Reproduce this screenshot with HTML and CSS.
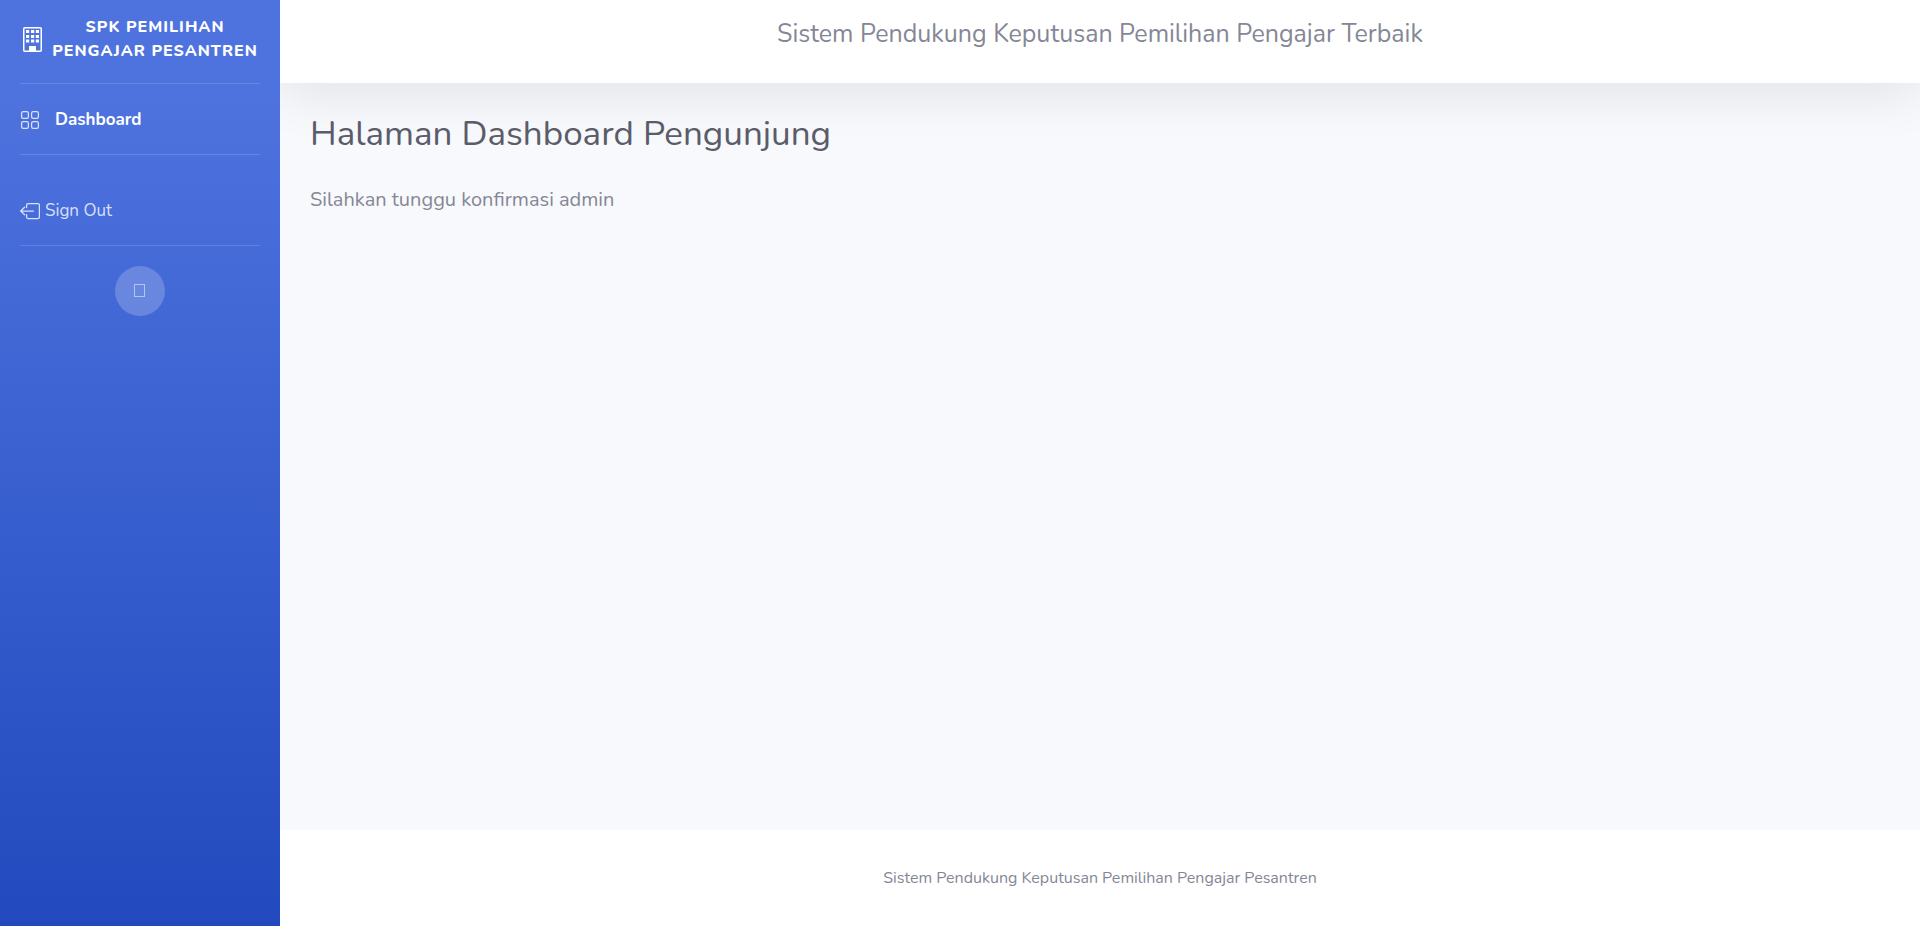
FILE: index.html
```html
<!DOCTYPE html>
<html lang="id">
<head>
<meta charset="utf-8">
<title>Dashboard Pengunjung</title>
<link rel="stylesheet" href="styles.css">
</head>
<body>
<div class="wrapper">
  <nav class="sidebar">
    <a class="brand" href="#">
      <svg class="brand-icon" width="19" height="25" viewBox="0 0 19 25" fill="none" aria-hidden="true">
        <rect x="0.75" y="0.75" width="17.5" height="23.5" rx="1" stroke="currentColor" stroke-width="1.5"/>
        <path fill="currentColor" d="M3 3h3.2v3H3zM8 3h3.2v3H8zM12.800 3h3.2v3h-3.200zM3 8h3.200v3H3zM8 8h3.200v3H8zM12.800 8h3.200v3h-3.200zM3 12.500h3.200v3H3zM8 12.500h3.200v3H8zM12.800 12.500h3.200v3h-3.200zM6 19h7v6H6z"/>
      </svg>
      <span class="brand-text">SPK Pemilihan Pengajar Pesantren</span>
    </a>
    <hr class="divider">
    <a class="nav-link active" href="#">
      <svg class="nav-icon" width="20" height="20" viewBox="0 0 20 20" fill="none" stroke="currentColor" stroke-width="1.25" aria-hidden="true">
        <rect x="1.6" y="1.6" width="6.800" height="6.800" rx="1.700"/>
        <rect x="11.600" y="1.600" width="6.800" height="6.800" rx="1.700"/>
        <rect x="1.600" y="11.600" width="6.800" height="6.800" rx="1.700"/>
        <rect x="11.600" y="11.600" width="6.800" height="6.800" rx="1.700"/>
      </svg>
      <span>Dashboard</span>
    </a>
    <hr class="divider">
    <a class="nav-link signout" href="#">
      <svg class="nav-icon" width="20" height="20" viewBox="0 0 20 20" fill="none" stroke="currentColor" stroke-width="1.250" stroke-linecap="round" stroke-linejoin="round" aria-hidden="true">
        <path d="M6.600 6.500V4a1.500 1.500 0 0 1 1.500-1.500H18A1.500 1.500 0 0 1 19.400 4v12a1.500 1.500 0 0 1-1.400 1.500H8.100A1.500 1.500 0 0 1 6.600 16v-2.500"/>
        <path d="M13.500 10H.7M4.600 6.200.7 10l3.900 3.800"/>
      </svg>
      <span>Sign Out</span>
    </a>
    <hr class="divider">
    <button class="toggle" type="button" aria-label="Toggle sidebar"><span class="toggle-glyph"></span></button>
  </nav>
  <div class="content">
    <header class="topbar">Sistem Pendukung Keputusan Pemilihan Pengajar Terbaik</header>
    <main class="page">
      <h1 class="page-title">Halaman Dashboard Pengunjung</h1>
      <p class="lead">Silahkan tunggu konfirmasi admin</p>
    </main>
    <footer class="footer">Sistem Pendukung Keputusan Pemilihan Pengajar Pesantren</footer>
  </div>
</div>
</body>
</html>
```
FILE: styles.css
```css
* { box-sizing: border-box; }
body {
  margin: 0;
  font-family: Nunito, Lato, sans-serif;
  font-size: 16px;
  line-height: 24px;
  color: #858796;
  background: #fff;
}
.wrapper { display: flex; min-height: 100vh; }
.sidebar {
  flex: 0 0 280px;
  display: flex;
  flex-direction: column;
  color: #fff;
  background: #4e73df linear-gradient(180deg, #4e73df 10%, #224abe 100%);
}
.sidebar a { color: inherit; text-decoration: none; }
.brand {
  display: flex;
  align-items: center;
  justify-content: center;
  gap: 10px;
  padding: 15px 22px 20px 23px;
}
.brand-icon { flex: none; }
.brand-text {
  flex: 1;
  font-weight: 800;
  letter-spacing: 1px;
  text-align: center;
  text-transform: uppercase;
}
.divider {
  width: 240px;
  margin: 0 20px;
  border: 0;
  border-top: 1px solid rgba(255, 255, 255, 0.15);
}
.nav-link {
  display: flex;
  align-items: center;
  padding: 24px 20px 22px;
  font-size: 17px;
}
.nav-icon { color: rgba(255, 255, 255, 0.8); }
.active { gap: 15px; font-weight: 700; }
.sidebar .signout {
  gap: 5px;
  padding: 44px 20px 22px;
  color: rgba(255, 255, 255, 0.8);
}
.toggle {
  display: flex;
  align-items: center;
  justify-content: center;
  align-self: center;
  width: 50px;
  height: 50px;
  margin-top: 20px;
  padding: 0 1px 1px 0;
  border: 0;
  border-radius: 50%;
  background: rgba(255, 255, 255, 0.2);
}
.toggle-glyph {
  width: 11px;
  height: 13px;
  border: 1px solid rgba(255, 255, 255, 0.5);
}
.content {
  flex: 1;
  min-width: 0;
  display: flex;
  flex-direction: column;
  overflow: hidden;
  background: #f8f9fc;
}
.topbar {
  padding: 18px 24px 33px;
  background: #fff;
  box-shadow: 0 16px 48px rgba(0, 0, 0, 0.08);
  font-size: 25px;
  line-height: 32px;
  text-align: center;
}
.page { flex: 1; padding: 29px 30px; }
.page-title {
  margin: 0 0 28px;
  color: #5a5c69;
  font-size: 35px;
  font-weight: 400;
  line-height: 44px;
}
.lead { margin: 0; font-size: 20px; line-height: 32px; }
.footer {
  padding: 36px 24px;
  background: #fff;
  text-align: center;
}
```
